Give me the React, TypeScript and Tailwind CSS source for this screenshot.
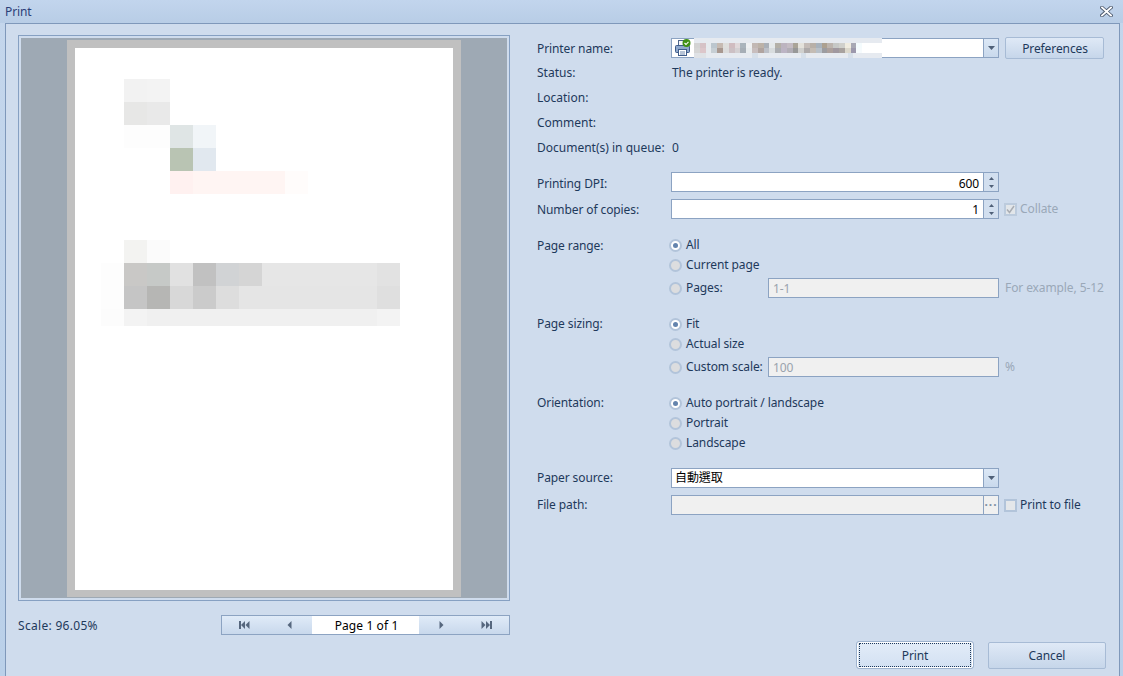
import React from "react";

const FONT = "font-['Noto_Sans','Noto_Sans_CJK_TC',sans-serif]";

const doc: [number, number, number, number, string][] = [
  [124, 79, 23, 23, "#f2f2f2"], [147, 79, 23, 23, "#f3f3f3"],
  [124, 102, 23, 23, "#e7e7e6"], [147, 102, 23, 23, "#e9e9e9"],
  [124, 125, 46, 23, "#fdfdfd"], [170, 125, 23, 23, "#dfe5e5"], [193, 125, 23, 23, "#f1f5f8"],
  [170, 148, 23, 23, "#b9c4b3"], [193, 148, 23, 23, "#e1e8ef"],
  [170, 171, 23, 23, "#fff1f0"], [193, 171, 92, 23, "#fff5f3"], [285, 171, 23, 23, "#fffcfb"],
  [124, 240, 23, 23, "#f3f3f1"], [147, 240, 23, 23, "#fbfbfb"],
  [101, 263, 23, 46, "#fdfdfd"],
  [124, 263, 23, 23, "#c9c8c6"], [147, 263, 23, 23, "#c6c9c7"], [170, 263, 23, 23, "#e1e1e1"], [193, 263, 23, 23, "#c1c1c1"],
  [216, 263, 23, 23, "#d1d3d5"], [239, 263, 23, 23, "#d5d5d5"], [262, 263, 115, 23, "#e6e6e6"], [377, 263, 23, 23, "#e2e2e2"],
  [124, 286, 23, 23, "#c5c5c5"], [147, 286, 23, 23, "#b6b6b4"], [170, 286, 23, 23, "#d8d8d8"], [193, 286, 23, 23, "#cbcbcb"],
  [216, 286, 23, 23, "#dddddd"], [239, 286, 138, 23, "#e5e5e5"], [377, 286, 23, 23, "#dfdfdf"],
  [101, 309, 23, 17, "#fcfcfc"], [124, 309, 23, 17, "#f3f3f3"], [147, 309, 230, 17, "#f0f0f0"], [377, 309, 23, 17, "#f3f3f3"],
];

const blurA = "d3d3d3 d6c2c6 e6eaee bcc6ce c6bab2 dededc d0bcc0 e0d8da aab4bc eef0f2 c2b8b4 bcb2a8 aab0b8 e4e8ea b4b0a8 bcb4c0 c4bcc4 aaa498 e4e2dc c4bcb8 b8b0a8 a8b2bc aca090 bcb4ae c6c8c6 d0d0cc f0ece0 a8a8b4 f4fbfd".split(" ");
const blurB = "d6d6d6 dcc6ca e6eaee c6ced4 a89890 dcdcdc ccc0c4 d4d0d2 a6aeb6 e8ecee c8bebe b0a4a0 bcc0c8 d8dcde aaacb0 bcb4c4 b2aeb6 989898 d0d0ce aeaaaa c4bcb4 b8c0c8 9c9ca0 aca09c a0989f a8a29f dcd8cc 9c98ac f6fbfd".split(" ");

function BlurStrip() {
  return (
    <svg width="188" height="20" viewBox="0 0 188 20" shapeRendering="crispEdges" className="block shrink-0">
      <rect x={0} y={0} width={188} height={5} fill="#e6eaf0" />
      <rect x={0} y={15} width={188} height={5} fill="#e6eaf0" />
      <rect x={0} y={15} width={12} height={5} fill="#dfe2e6" />
      <rect x={58} y={15} width={6} height={5} fill="#d6dfe9" />
      <rect x={107} y={15} width={5} height={5} fill="#d6dfe9" />
      <rect x={154} y={15} width={5} height={5} fill="#d6dfe9" />
      <rect x={172} y={5} width={16} height={10} fill="#ffffff" />
      {blurA.map((c, i) => <rect key={i} x={i * 5.8} y={5} width={5.8} height={5} fill={"#" + c} />)}
      {blurB.map((c, i) => <rect key={i} x={i * 5.8} y={10} width={5.8} height={5} fill={"#" + c} />)}
    </svg>
  );
}

function PrinterIcon() {
  return (
    <svg width="16" height="18" viewBox="0 0 16 18" className="block shrink-0">
      <rect x="3.500" y="1.500" width="8" height="5" fill="#f4f6fa" stroke="#51688c" />
      <rect x="0.500" y="6.500" width="14" height="7" rx="1" fill="#8fa8cc" stroke="#3f5c8a" />
      <rect x="3.500" y="10.500" width="8" height="6" fill="#ffffff" stroke="#3f5c8a" />
      <path d="M5 13h5M5 15h5" stroke="#6e88ad" />
      <circle cx="11.500" cy="4" r="4" fill="#3f8f15" />
      <path d="M9.500 4l1.500 1.500L13.500 2.800" stroke="#ffffff" strokeWidth="1.100" fill="none" />
    </svg>
  );
}

function Radio({ on }: { on?: boolean }) {
  return (
    <span className={`w-[13px] h-[13px] rounded-full border-2 border-[#b2c4da] flex items-center justify-center shrink-0 ml-[-2px] ${on ? "bg-white" : "bg-[#dcdddf]"}`}>
      {on && <span className="w-[5px] h-[5px] rounded-full bg-[#6484ad]" />}
    </span>
  );
}

function Check({ checked, faded }: { checked?: boolean; faded?: boolean }) {
  return (
    <span className={`w-[13px] h-[13px] border-2 flex items-center justify-center shrink-0 ${faded ? "border-[#bccbdd] bg-[#e2e6ea]" : "border-[#b2c4da] bg-[#e4e7ea]"}`}>
      {checked && (
        <svg width="9" height="9" viewBox="0 0 9 9"><path d="M1 4.500l2.500 3L8 1" stroke="#a9adb3" strokeWidth="1.500" fill="none" /></svg>
      )}
    </span>
  );
}

function Arrow() {
  return (
    <div className="w-[15px] h-full border-l border-[#8ca3c2] bg-gradient-to-b from-[#dce8f6] to-[#c9d9ec] flex items-center justify-center">
      <svg width="7" height="4" viewBox="0 0 7 4"><path d="M0 0h7L3.500 4z" fill="#4f6078" /></svg>
    </div>
  );
}

function Spin() {
  return (
    <div className="w-[15px] h-full border-l border-[#8ca3c2] bg-[#d2dfef] flex flex-col items-center justify-center gap-[5px]">
      <svg width="5" height="3" viewBox="0 0 5 3"><path d="M0 3h5L2.500 0z" fill="#4f6078" /></svg>
      <svg width="5" height="3" viewBox="0 0 5 3"><path d="M0 0h5L2.500 3z" fill="#4f6078" /></svg>
    </div>
  );
}

function Box({ children, className = "" }: { children?: React.ReactNode; className?: string }) {
  return <div className={`h-5 border border-[#8ca3c2] flex items-stretch ${className}`}>{children}</div>;
}

function Label({ children, className = "" }: { children: React.ReactNode; className?: string }) {
  return <div className={`w-[134px] shrink-0 ${className}`}>{children}</div>;
}

function InfoRow({ label, value, h = "h-[25px]", text = "pt-[2px]" }: { label: string; value?: string; h?: string; text?: string }) {
  return (
    <div className={`flex items-center ${h}`}>
      <Label className={`${text} tracking-normal whitespace-nowrap`}>{label}</Label>
      {value && <span className={`${text} pl-[1px]`}>{value}</span>}
    </div>
  );
}

function Option({ label, on, h, field, hint, labelW }: { label: string; on?: boolean; h: string; field?: string; hint?: string; labelW?: string }) {
  return (
    <div className={`flex items-center ${h}`}>
      <Radio on={on} />
      <span className={`ml-[4px] ${labelW ?? ""}`}>{label}</span>
      {field && (
        <>
          <Box className="w-[231px] bg-[#f0f0f0] items-center px-1 text-[#9aa3ad]">
            <span className="leading-[18px] pt-[1px]">{field}</span>
          </Box>
          <span className="ml-[6px] text-[#9aa8b8] whitespace-nowrap">{hint}</span>
        </>
      )}
    </div>
  );
}

function Group({ label, children, className = "", labelClass = "" }: { label: string; children: React.ReactNode; className?: string; labelClass?: string }) {
  return (
    <div className={`flex ${className}`}>
      <Label className={`h-5 flex items-center ${labelClass}`}>{label}</Label>
      <div className="flex flex-col flex-1">{children}</div>
    </div>
  );
}

function NavBtn({ d }: { d: string }) {
  return (
    <div className="w-[45px] flex items-center justify-center">
      <svg width="11" height="8" viewBox="0 0 11 8"><path d={d} fill="#56677e" /></svg>
    </div>
  );
}

function Btn({ children, focus, className = "" }: { children: React.ReactNode; focus?: boolean; className?: string }) {
  return (
    <div className={`shrink-0 rounded-[2px] border bg-gradient-to-b flex items-center justify-center ${focus ? "border-white outline outline-1 outline-[#9fb4cf] from-[#e2ecf8] to-[#d3e1f2]" : "border-[#a7bbd5] from-[#dfe9f6] to-[#c6d6ea]"} ${className}`}>
      {focus ? (
        <div className="w-full h-full m-[1px] border border-dotted border-[#1e395b] flex items-center justify-center pt-[2px]">{children}</div>
      ) : children}
    </div>
  );
}

export default function App() {
  return (
    <div className={`w-[1123px] h-[676px] overflow-hidden flex flex-col bg-gradient-to-b from-[#c4d6ec] to-[#bad0e9] text-[12px] leading-none tracking-[-0.1px] text-[#1e395b] ${FONT}`}>
      <div className="h-[23px] shrink-0 flex items-center justify-between pl-[5px] pr-[10px] bg-gradient-to-b from-[#c2d5ed] to-[#b8cde6]">
        <span className="text-[#2c3f78]">Print</span>
        <svg width="13" height="11" viewBox="0 0 13 11">
          <path d="M2 1.500L11 9.500M11 1.500L2 9.500" stroke="#4d5a6e" strokeWidth="3.600" strokeLinecap="square" />
          <path d="M2 1.500L11 9.500M11 1.500L2 9.500" stroke="#ffffff" strokeWidth="1.800" strokeLinecap="square" />
        </svg>
      </div>

      <div className="flex-1 ml-[5px] mr-[3px] border border-b-0 border-[#7f98ba] bg-[#cfdced] flex pl-3 pt-[11px] min-h-0">
        {/* left column */}
        <div className="w-[492px] shrink-0 flex flex-col">
          <div className="h-[566px] border border-[#86a0c2] p-[2px] shrink-0">
            <div className="h-full bg-[#9ea9b4] flex justify-center pt-[2px] pr-[1px]">
              <div className="w-[394px] h-[557px] bg-[#c0c0c0] pt-2 pl-2">
                <div className="w-[378px] h-[542px] bg-white">
                  <svg width="378" height="542" viewBox="75 48 378 542" shapeRendering="crispEdges" className="block">
                    {doc.map(([x, y, w, h, c], i) => <rect key={i} x={x} y={y} width={w} height={h} fill={c} />)}
                  </svg>
                </div>
              </div>
            </div>
          </div>
          <div className="flex items-center justify-between mt-[14px] h-5">
            <span className="pt-[2px] tracking-[0.3px]">Scale: 96.05%</span>
            <div className="w-[289px] h-5 border border-[#8ca3c2] flex bg-gradient-to-b from-[#e0ebf8] to-[#c8d8ec]">
              <NavBtn d="M0 0h2v8H0zM6 0v8L2 4zM10.500 0v8l-4-4z" />
              <NavBtn d="M7.500 0v8L3.500 4z" />
              <div className="w-[108px] bg-white flex items-center justify-center text-black pt-[2px] pl-[2px] tracking-[0.1px]">Page 1 of 1</div>
              <NavBtn d="M3.500 0v8l4-4z" />
              <NavBtn d="M.5 0v8l4-4zM5 0v8l4-4zM9 0h2v8H9z" />
            </div>
          </div>
        </div>

        {/* right column */}
        <div className="ml-[27px] w-[570px] flex flex-col">
          <div className="flex items-center h-5 mt-[3px]">
            <Label className="pt-[2px]">Printer name:</Label>
            <Box className="w-[328px] bg-white">
              <div className="flex-1 flex items-center pl-[3px]">
                <PrinterIcon />
                <div className="ml-[3px]"><BlurStrip /></div>
              </div>
              <Arrow />
            </Box>
            <Btn className="ml-[6px] w-[99px] h-[22px] pt-[2px] pl-[1px]">Preferences</Btn>
          </div>
          <InfoRow label="Status:" value="The printer is ready." h="h-[25px] mt-[2px]" text="pt-0" />
          <InfoRow label="Location:" h="h-[25px]" text="pt-[1px]" />
          <InfoRow label="Comment:" text="pt-[1px]" />
          <InfoRow label="Document(s) in queue:" value="0" text="pt-[1px]" />

          <div className="flex items-center h-5 mt-[12px]">
            <Label className="pt-[4px]">Printing DPI:</Label>
            <Box className="w-[328px] bg-white text-black">
              <div className="flex-1 flex items-center justify-end pr-[4px] pt-[3px]">600</div>
              <Spin />
            </Box>
          </div>
          <div className="flex items-center h-5 mt-[7px]">
            <Label className="pt-[2px]">Number of copies:</Label>
            <Box className="w-[328px] bg-white text-black">
              <div className="flex-1 flex items-center justify-end pr-[4px] pt-[2px]">1</div>
              <Spin />
            </Box>
            <div className="flex items-center ml-[5px] text-[#9aa8b8]">
              <Check checked faded />
              <span className="ml-[3px]">Collate</span>
            </div>
          </div>

          <Group label="Page range:" labelClass="pt-[2px]" className="mt-[16px]">
            <Option label="All" on h="h-5" />
            <Option label="Current page" h="h-5" />
            <Option label="Pages:" h="h-5 mt-[3px]" labelW="w-[82px]" field="1-1" hint="For example, 5-12" />
          </Group>

          <Group label="Page sizing:" className="mt-[16px]">
            <Option label="Fit" on h="h-5" />
            <Option label="Actual size" h="h-5" />
            <Option label="Custom scale:" h="h-5 mt-[3px]" labelW="w-[82px]" field="100" hint="%" />
          </Group>

          <Group label="Orientation:" className="mt-[16px]">
            <Option label="Auto portrait / landscape" on h="h-5" />
            <Option label="Portrait" h="h-5" />
            <Option label="Landscape" h="h-5" />
          </Group>

          <div className="flex items-center h-5 mt-[15px]">
            <Label>Paper source:</Label>
            <Box className="w-[328px] bg-white text-black">
              <div className="flex-1 flex items-center pl-[3px]">自動選取</div>
              <Arrow />
            </Box>
          </div>
          <div className="flex items-center h-5 mt-[7px]">
            <Label>File path:</Label>
            <Box className="w-[328px] bg-[#f0f0f0]">
              <div className="flex-1" />
              <div className="w-[15px] border-l border-[#8ca3c2] flex items-center justify-center text-[#7f90a6] tracking-[1px] font-bold">···</div>
            </Box>
            <div className="flex items-center ml-[5px]">
              <Check />
              <span className="ml-[3px]">Print to file</span>
            </div>
          </div>

          <div className="flex mt-[127px] pl-[320px]">
            <Btn focus className="w-[116px] h-[26px]">Print</Btn>
            <Btn className="ml-[15px] w-[118px] h-[27px]">Cancel</Btn>
          </div>
        </div>
      </div>
    </div>
  );
}
